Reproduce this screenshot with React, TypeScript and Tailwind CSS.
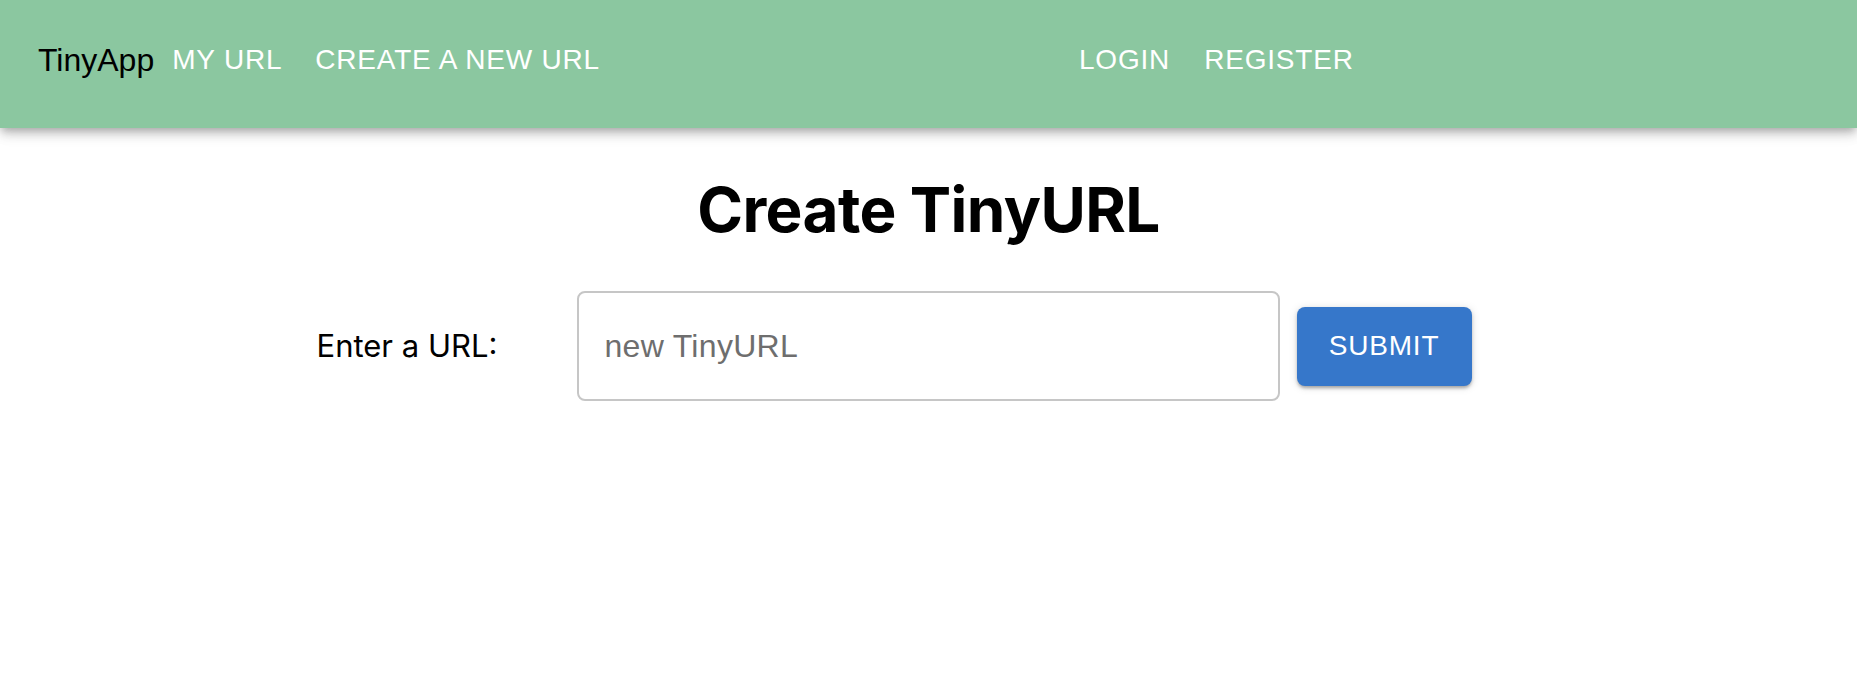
import React from "react";

export default function App() {
  const mui = { fontFamily: '"Liberation Sans", Arial, Helvetica, sans-serif' };
  const sys = { fontFamily: 'Inter, "Noto Sans", sans-serif' };
  return (
    <div className="min-h-[691px] w-full bg-white">
      <header
        className="relative z-10 flex h-[128px] items-center bg-[#8bc7a0] pb-[8px] pl-[38px] shadow-[0_4px_8px_-2px_rgba(0,0,0,0.25),0_8px_10px_0_rgba(0,0,0,0.10),0_2px_20px_0_rgba(0,0,0,0.08)]"
        style={mui}
      >
        <div className="flex w-[1041px] items-center">
          <span className="text-[32px] leading-none text-black">TinyApp</span>
          <a className="ml-[18px] text-[28px] leading-none tracking-[0.8px] text-white">MY URL</a>
          <a className="ml-[33px] text-[28px] leading-none tracking-[0.8px] text-white">CREATE A NEW URL</a>
        </div>
        <div className="flex items-center">
          <a className="text-[28px] leading-none tracking-[0.8px] text-white">LOGIN</a>
          <a className="ml-[34px] text-[28px] leading-none tracking-[0.8px] text-white">REGISTER</a>
        </div>
      </header>

      <main>
        <h1
          className="mt-[51px] text-center text-[62px] font-bold leading-none tracking-[-0.6px] text-black"
          style={sys}
        >
          Create TinyURL
        </h1>

        <div className="mx-auto mt-[50px] flex w-[1224px] items-center">
          <label className="w-[260px] text-[31px] text-black" style={sys}>
            Enter a URL:
          </label>
          <div className="flex h-[110px] w-[703px] items-center rounded-[8px] border-2 border-[#c6c6c6] px-[26px]">
            <input
              className="w-full bg-transparent text-[32px] tracking-[0.3px] text-black outline-none placeholder:text-[#6e6e6e]"
              style={mui}
              placeholder="new TinyURL"
            />
          </div>
          <button
            className="ml-[17px] flex h-[79px] w-[175px] items-center justify-center rounded-[8px] bg-[#3677ca] text-[28px] tracking-[0.8px] text-white shadow-[0_3px_3px_-1px_rgba(0,0,0,0.2),0_2px_4px_0_rgba(0,0,0,0.14),0_1px_10px_0_rgba(0,0,0,0.12)]"
            style={mui}
          >
            SUBMIT
          </button>
        </div>
      </main>
    </div>
  );
}
